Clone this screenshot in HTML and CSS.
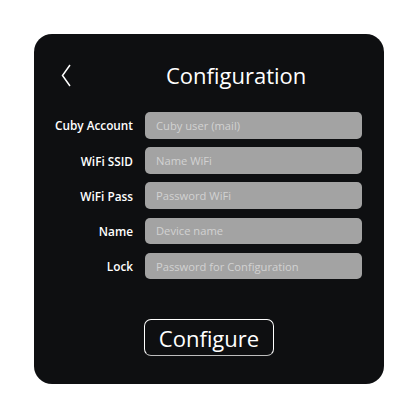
FILE: index.html
```html
<!DOCTYPE html>
<html>
<head>
<meta charset="utf-8">
<link rel="stylesheet" href="styles.css">
</head>
<body>
<div class="card">
  <div class="header">
    <svg class="back" width="10" height="23" viewBox="0 0 10 23"><polyline points="9,1 1.5,11.5 9,22" fill="none" stroke="#ffffff" stroke-width="1.5" stroke-linejoin="miter"/></svg>
    <div class="title">Configuration</div>
  </div>
  <div class="form">
    <div class="label">Cuby Account</div><div class="input">Cuby user (mail)</div>
    <div class="label">WiFi SSID</div><div class="input">Name WiFi</div>
    <div class="label">WiFi Pass</div><div class="input">Password WiFi</div>
    <div class="label">Name</div><div class="input">Device name</div>
    <div class="label">Lock</div><div class="input">Password for Configuration</div>
  </div>
  <div class="actions">
    <div class="button">Configure</div>
  </div>
</div>
</body>
</html>
```
FILE: styles.css
```css
html, body {
  margin: 0;
  padding: 0;
  background: #ffffff;
}
body {
  padding: 34px 0 0 34px;
  font-family: "Open Sans", "Noto Sans", sans-serif;
}
.card {
  width: 350px;
  height: 350px;
  box-sizing: border-box;
  background: #0e0f11;
  border-radius: 18px;
  display: flex;
  flex-direction: column;
}
.header {
  display: flex;
  align-items: center;
  height: 30px;
  margin-top: 26px;
  padding-left: 27px;
}
.back {
  display: block;
}
.title {
  color: #ffffff;
  font-size: 22px;
  margin-left: 95px;
  line-height: 30px;
}
.form {
  margin-top: 22px;
  display: grid;
  grid-template-columns: 99px 217px;
  column-gap: 12px;
  row-gap: 8.5px;
  grid-auto-rows: 26.7px;
}
.label {
  color: #ffffff;
  font-weight: 600;
  font-size: 11.8px;
  text-align: right;
  display: flex;
  align-items: center;
  justify-content: flex-end;
}
.input {
  background: #a3a3a3;
  border-radius: 5px;
  color: #d2d2d2;
  font-size: 11.2px;
  padding-left: 11px;
  display: flex;
  align-items: center;
}
.actions {
  display: flex;
  justify-content: center;
  margin-top: 40px;
}
.button {
  box-sizing: border-box;
  width: 130px;
  height: 37px;
  border: 1.5px solid #ffffff;
  border-bottom-color: #bdbdbd;
  border-radius: 7px;
  color: #ffffff;
  font-size: 22px;
  display: flex;
  align-items: center;
  justify-content: center;
}
```
